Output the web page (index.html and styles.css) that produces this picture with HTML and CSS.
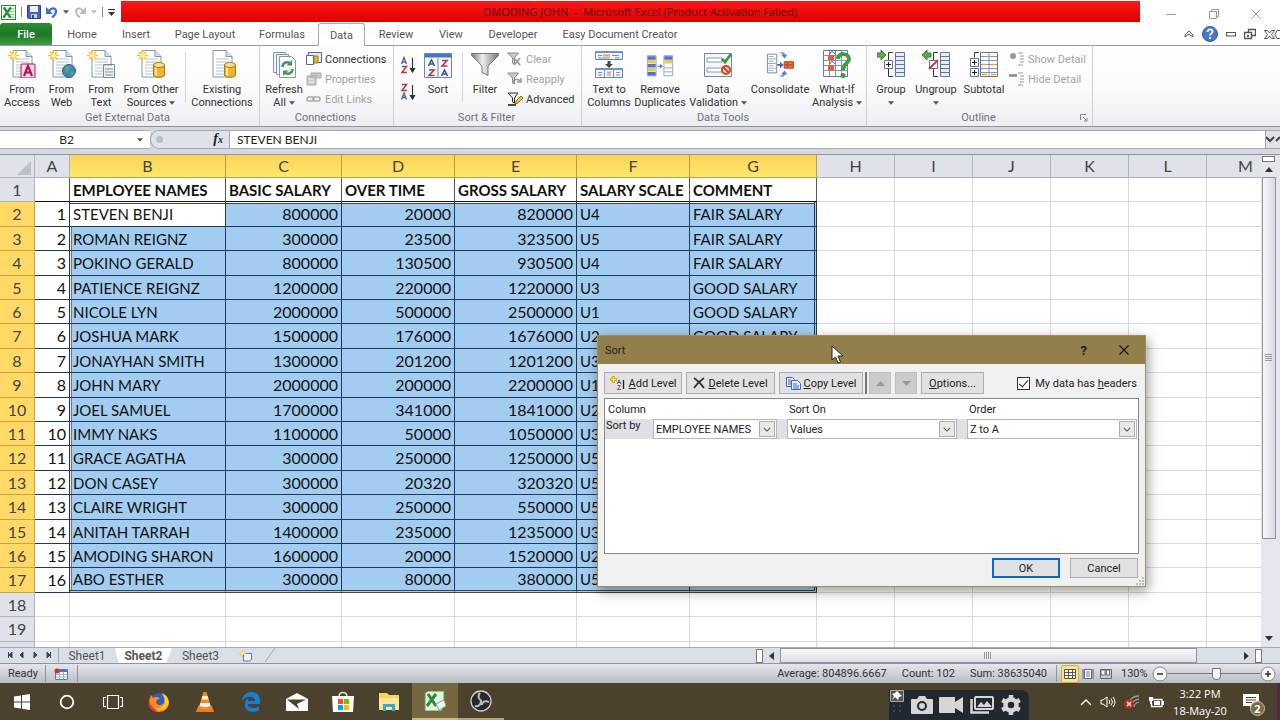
FILE: index.html
```html
<!DOCTYPE html>
<html lang="en">
<head>
<meta charset="utf-8">
<title>OMODING JOHN - Microsoft Excel (Product Activation Failed)</title>
<link rel="stylesheet" href="styles.css">
</head>
<body>
<svg class="defs" aria-hidden="true">
  <symbol id="doc" viewBox="0 0 28 28"><path d="M5 .5h13l6 6v20.500H5z" fill="#fdfefe" stroke="#8295ad"/><path d="M18 .5v6h6" fill="#d4e0ee" stroke="#8295ad"/><path d="M8 9h13M8 12h13M8 15h13M8 18h13M8 21h13M8 24h13" stroke="#b7c2d0"/></symbol>
  <symbol id="spark" viewBox="0 0 12 12"><path d="M6 0v12M0 6h12M2 2l8 8M10 2l-8 8" stroke="#f1c232" stroke-width="1.500"/><circle cx="6" cy="6" r="2.500" fill="#fff48c"/></symbol>
  <symbol id="can" viewBox="0 0 12 16"><path d="M.5 3v10c0 3 11 3 11 0V3" fill="#e9b52c" stroke="#a87a1e"/><path d="M2 4v9l2 1V4z" fill="#fce79b"/><ellipse cx="6" cy="3" rx="5.500" ry="2.500" fill="#fbe08a" stroke="#a87a1e"/></symbol>
  <symbol id="down" viewBox="0 0 7 4"><path d="M0 0h7L3.500 4z" fill="#555"/></symbol>
  <symbol id="az" viewBox="0 0 16 18"><path d="M1.500 8 4 1.500 6.500 8M2.500 6h3" fill="none" stroke="#3f62a6" stroke-width="1.300"/><path d="M2 10.500h4.500L2 16.500h5" fill="none" stroke="#b23b3b" stroke-width="1.500"/><path d="M12.500 2v13M10 12l2.500 4 2.500-4" fill="#333" stroke="#333" stroke-width="1.200"/></symbol>
  <symbol id="za" viewBox="0 0 16 18"><path d="M2 1.500h4.500L2 7.500h5" fill="none" stroke="#b23b3b" stroke-width="1.500"/><path d="M1.500 16.500 4 10l2.500 6.500M2.500 14.500h3" fill="none" stroke="#3f62a6" stroke-width="1.300"/><path d="M12.500 2v13M10 12l2.500 4 2.500-4" fill="#333" stroke="#333" stroke-width="1.200"/></symbol>
  <symbol id="funnel" viewBox="0 0 14 14"><path d="M.5 1h11L7.500 6v6l-2-1V6z" fill="#c9c9c9" stroke="#8d8d8d"/></symbol>
  <symbol id="chev" viewBox="0 0 10 6"><path d="M1 1l4 4 4-4" fill="none" stroke="#555" stroke-width="1.300"/></symbol>
</svg>
<div class="excel">
  <header class="titlebar">
    <div class="quick">
      <svg class="q-logo" viewBox="0 0 16 16"><rect x=".5" y=".5" width="15" height="15" fill="#f3faf2" stroke="#2f7d3a"/><path d="M9 4h5M9 7h5M9 10h5M9 13h5" stroke="#7eb582"/><path d="M3 2.500l7 11M10.500 2.500l-8 11" stroke="#2b8a3b" stroke-width="2.600"/></svg>
      <i class="tick"></i>
      <button class="bare" aria-label="Save"><svg width="14" height="14" viewBox="0 0 14 14"><path d="M.5.5h13v13h-12l-1-1z" fill="#4a61c4" stroke="#33418f"/><path d="M3 1h8v6H3z" fill="#eef2fb"/><path d="M4 9h6v4H4z" fill="#c8d2ee"/><path d="M5 10h2v3H5z" fill="#33418f"/></svg></button>
      <button class="bare" aria-label="Undo"><svg width="12" height="12" viewBox="0 0 12 12"><path d="M3 5C6 1 10 2 10 5.500 10 8 8 10 6 11.500" fill="none" stroke="#3f6fca" stroke-width="2.200"/><path d="M0 1v7h7z" fill="#3f6fca"/></svg></button>
      <svg class="caret" aria-hidden="true"><use href="#down"/></svg>
      <button class="bare redo" aria-label="Redo"><svg width="12" height="12" viewBox="0 0 12 12"><path d="M9 5C6 1 2 2 2 5.500 2 8 4 10 6 11.500" fill="none" stroke="#bcbcbc" stroke-width="2"/><path d="M12 1v7H5z" fill="#bcbcbc"/></svg></button>
      <svg class="caret pale" aria-hidden="true"><use href="#down"/></svg>
      <i class="tick"></i>
      <svg width="7" height="7" viewBox="0 0 7 7"><path d="M0 .5h7" stroke="#333"/><path d="M0 3h7L3.500 7z" fill="#333"/></svg>
    </div>
    <h1 class="caption">OMODING JOHN &nbsp;-&nbsp; Microsoft Excel (Product Activation Failed)</h1>
    <div class="winctl">
      <button class="bare" aria-label="Minimize"><svg width="10" height="10" viewBox="0 0 10 10"><path d="M0 5.500h10" stroke="#999"/></svg></button>
      <button class="bare" aria-label="Restore"><svg width="10" height="10" viewBox="0 0 10 10"><path d="M.5 2.500h7v7h-7zM2.500 2.500v-2h7v7h-2" fill="none" stroke="#999"/></svg></button>
      <button class="bare" aria-label="Close"><svg width="10" height="10" viewBox="0 0 10 10"><path d="M.5.5l9 9M9.500.5l-9 9" stroke="#999"/></svg></button>
    </div>
  </header>
  <nav class="tabs">
    <button class="tab file">File</button><button class="tab t-home">Home</button><button class="tab t-insert">Insert</button><button class="tab t-page">Page Layout</button><button class="tab t-form">Formulas</button><button class="tab active">Data</button><button class="tab t-review">Review</button><button class="tab t-insert">View</button><button class="tab t-dev">Developer</button><button class="tab t-easy">Easy Document Creator</button>
    <div class="tabtools">
      <svg width="10" height="8" viewBox="0 0 10 8"><path d="M1 5l4-4 4 4v2L5 4 1 7z" fill="#fff" stroke="#555"/></svg>
      <svg width="16" height="16" viewBox="0 0 16 16"><circle cx="8" cy="8" r="7.500" fill="#4b77c9" stroke="#2c57a8"/><path d="M5.500 6C5.500 2.500 10.500 2.800 10.500 5.700 10.500 7.500 8 7.500 8 9.500M8 11v2" fill="none" stroke="#fff" stroke-width="1.800"/></svg>
      <svg width="10" height="5" viewBox="0 0 10 5"><rect x=".5" y=".5" width="9" height="3.500" fill="#fff" stroke="#555"/></svg>
      <svg width="12" height="12" viewBox="0 0 12 12"><path d="M4.500 4V1.500h7v6H8M.5 4.500h7v6h-7z" fill="#fff" stroke="#555" stroke-width="1.400"/><path d="M3 7h2v2H3z" fill="#555"/></svg>
      <svg width="16" height="9" viewBox="0 0 16 9"><path d="M.5.5h3L5.500 3l2-2.500h3L7.500 4.500l3 4h-3L5.500 6l-2 2.500h-3l3-4zM16 .5h-3l-2 4 2 4h3" fill="#fff" stroke="#555"/></svg>
    </div>
  </nav>
  <section class="ribbon">
    <div class="group g-ext">
      <div class="tools">
        <button class="big b44"><svg viewBox="0 0 28 28"><use href="#doc"/><use href="#spark" x="0" y="0" width="11" height="11"/><rect x="13" y="14" width="14" height="14" rx="1" fill="#f5d5e4" stroke="#a3195b"/><path d="M16 26l4-10 4 10M17.500 22.500h5" fill="none" stroke="#a3195b" stroke-width="2.200"/></svg>From<br>Access</button>
        <button class="big b35"><svg viewBox="0 0 28 28"><use href="#doc"/><use href="#spark" x="0" y="0" width="11" height="11"/><circle cx="21" cy="21" r="6.500" fill="#3c86c6" stroke="#2a5d92"/><path d="M17 18c3-3 5-2 5 0s-3 2-2 4-4 0-3-4M22 24c1-3 4-3 4-1s-3 4-4 1" fill="#58ae58"/></svg>From<br>Web</button>
        <button class="big b44"><svg viewBox="0 0 28 28"><use href="#doc"/><use href="#spark" x="0" y="0" width="11" height="11"/><path d="M16.500 14.500h11v13h-11z" fill="#f4f7fa" stroke="#7b8898"/><path d="M18 14v2M21 14v2M24 14v2M18 19h8M18 22h8M18 25h8" stroke="#7b8898"/></svg>From<br>Text</button>
        <button class="big b56"><svg viewBox="0 0 28 28"><use href="#doc"/><use href="#spark" x="0" y="0" width="11" height="11"/><use href="#can" x="16" y="12" width="12" height="16"/></svg>From Other<br>Sources <svg class="caret" aria-hidden="true"><use href="#down"/></svg></button>
        <i class="split"></i>
        <button class="big b66"><svg viewBox="0 0 28 28"><use href="#doc"/><use href="#can" x="16" y="12" width="12" height="16"/></svg>Existing<br>Connections</button>
      </div>
      <h2>Get External Data</h2>
    </div>
    <div class="group g-con">
      <div class="tools">
        <button class="big b44"><svg viewBox="0 0 28 28"><path d="M3.500 2.500h12v20h-12z" fill="#eef3f9" stroke="#8295ad"/><path d="M6.500 4.500h12v20h-12z" fill="#eef3f9" stroke="#8295ad"/><path d="M9.500 6.500h12l4 4v17h-16z" fill="#fff" stroke="#8295ad"/><path d="M12.500 17c0-5 6-6 8-3M22.500 19c0 5-6 6-8 3" fill="none" stroke="#3f9c4a" stroke-width="2.400"/><path d="M22 10v5.500h-5.500zM13 26v-5.500h5.500z" fill="#3f9c4a"/></svg>Refresh<br>All <svg class="caret" aria-hidden="true"><use href="#down"/></svg></button>
        <div class="list">
          <button class="small"><svg viewBox="0 0 16 14"><path d="M2.500.5h13v10h-13z" fill="#dfe8f4" stroke="#54698a"/><path d="M.5 3.500h7v9h-7z" fill="#fff" stroke="#54698a"/><path d="M8 4h4v7H8z" fill="#e9b52c" stroke="#a87a1e"/></svg>Connections</button>
          <button class="small" disabled><svg viewBox="0 0 16 14"><path d="M5 1h10v5H5zM1 4h9v9H1z" fill="#c9c9c9" stroke="#aaa"/><path d="M3 7h5M3 10h5" stroke="#fff"/></svg>Properties</button>
          <button class="small" disabled><svg viewBox="0 0 16 14"><rect x="1" y="5" width="7" height="4" rx="2" fill="none" stroke="#aaa" stroke-width="1.600"/><rect x="7" y="5" width="7" height="4" rx="2" fill="none" stroke="#aaa" stroke-width="1.600"/></svg>Edit Links</button>
        </div>
      </div>
      <h2>Connections</h2>
    </div>
    <div class="group g-sort">
      <div class="tools">
        <div class="azcol"><button class="bare" aria-label="Sort A to Z"><svg width="16" height="18"><use href="#az"/></svg></button><button class="bare" aria-label="Sort Z to A"><svg width="16" height="18"><use href="#za"/></svg></button></div>
        <button class="big b44"><svg viewBox="0 0 28 28"><path d="M.5 3.500h27v24H.5z" fill="#f4f8fd" stroke="#6f87ab"/><path d="M1 4h26v3.500H1z" fill="#4475cf"/><path d="M14 8v19" stroke="#6f87ab"/><path d="M4.500 16 7.500 10l3 6M5.500 14h4M17.500 26l3-6 3 6M18.500 24h4" fill="none" stroke="#34549c" stroke-width="1.500"/><path d="M5 20h5l-5 5.500h5.500M18 10.500h5l-5 5.500h5.500" fill="none" stroke="#b23b3b" stroke-width="1.600"/></svg>Sort</button>
        <i class="split"></i>
        <button class="big b44"><svg viewBox="0 0 28 28"><defs><linearGradient id="fg"><stop offset="0" stop-color="#777"/><stop offset=".4" stop-color="#eee"/><stop offset="1" stop-color="#777"/></linearGradient></defs><path d="M.5 3.500h27v2L17 16v9.500l-6-3V16L.5 5.500z" fill="url(#fg)" stroke="#777"/></svg>Filter</button>
        <div class="list">
          <button class="small" disabled><svg viewBox="0 0 16 14"><use href="#funnel" width="14" height="14"/><path d="M7 6l6 7M13 6l-6 7" stroke="#999" stroke-width="1.800"/></svg>Clear</button>
          <button class="small" disabled><svg viewBox="0 0 16 14"><use href="#funnel" width="14" height="14"/><path d="M6 11c0-4 6-5 8-1M14 6v4h-4" fill="none" stroke="#999" stroke-width="1.600"/></svg>Reapply</button>
          <button class="small"><svg viewBox="0 0 16 14"><path d="M1 1h10L7.500 6v5l-2-1V6z" fill="#eee" stroke="#333"/><path d="M1 13h8" stroke="#222" stroke-width="1.600"/><path d="M8 12l1-3 5-5 2 2-5 5z" fill="#efc53b" stroke="#8a6a1e"/></svg>Advanced</button>
        </div>
      </div>
      <h2>Sort &amp; Filter</h2>
    </div>
    <div class="group g-data">
      <div class="tools">
        <button class="big b50"><svg viewBox="0 0 28 28"><path d="M.5 1.500h27v8H.5zM.5 18.500h27v9H.5z" fill="#f1f6fc" stroke="#6b86ad"/><path d="M1 1h26v2H1zM1 18h26v2H1z" fill="#6b94cf"/><path d="M3 5.500h4M17 5.500h7M3 8h12M20 8h5M3 22.500h4M21 22.500h4M3 25h4M12 25h4M21 25h4M9.500 19v8M18.500 19v8" stroke="#6b94cf"/><path d="M8 5.500h7M12 22.500h4" stroke="#e6ab2d" stroke-width="2"/><path d="M12.500 11h3v3H18l-4 4-4-4h2.500z" fill="#444"/></svg>Text to<br>Columns</button>
        <button class="big b52"><svg viewBox="0 0 32 28"><path d="M1.500 4.500h10v23h-10zM20.500 4.500h10v23h-10z" fill="#fff" stroke="#8a9bb5"/><path d="M2 5h9v4H2zM2 14h9v4H2zM2 23h9v4H2zM21 5h9v4h-9z" fill="#4a72d0"/><path d="M2 9.500h9v4H2zM2 18.500h9v4H2zM21 9.500h9v4h-9z" fill="#f1c84b"/><path d="M21 18.500h9M21 23h9" stroke="#8a9bb5"/><path d="M13 16h3v-2l3.500 2.500L16 19v-2h-3z" fill="#4a72d0"/></svg>Remove<br>Duplicates</button>
        <button class="big b64"><svg viewBox="0 0 28 28"><path d="M.5 3.500h27v23H.5z" fill="#f4f7fb" stroke="#6f87ab"/><path d="M3 8h15v4H3zM3 18h15v4H3z" fill="#fff" stroke="#8c9aae"/><path d="M18 9l3 3 6-8" fill="none" stroke="#2f9e3a" stroke-width="2.800"/><circle cx="22" cy="20" r="4" fill="#f7d9cf" stroke="#d8431f" stroke-width="2"/><path d="M19 17l6 6" stroke="#d8431f" stroke-width="1.800"/></svg>Data<br>Validation <svg class="caret" aria-hidden="true"><use href="#down"/></svg></button>
        <button class="big b60"><svg viewBox="0 0 30 28"><path d="M1.500 3.500h10v20h-10z" fill="#fff" stroke="#74839b"/><path d="M1.500 8.500h10M1.500 13.500h10M1.500 18.500h10M3 6h5M3 11h5M3 16h5M3 21h5" stroke="#92a4bf"/><path d="M19.500 11.500h10v7h-10z" fill="#ef6a3d" stroke="#b93e17"/><path d="M20 15h9M23 12v6" stroke="#b93e17"/><path d="M12 14h3v-2.500l4 3.500-4 3.500V16h-3z" fill="#3c68c4"/><path d="M13 3c4-3 7-1 8 1h2l-3 4-4-4h2c-1-2-3-2-5-1M13 26c4 3 7 1 8-1h2l-3-4-4 4h2c-1 2-3 2-5 1" fill="#5b84d4"/></svg>Consolidate</button>
        <button class="big b54"><svg viewBox="0 0 28 28"><path d="M.5.500h24v26H.5z" fill="#fff" stroke="#6b7c96"/><path d="M1 5.500h23M1 10.500h23M1 15.500h23M1 20.500h23M6.500 1v25M12.500 1v25M18.500 1v25" stroke="#8593a8"/><path d="M5 5h6v5H5zM5 15h6v5H5z" fill="#ee5a2d"/><path d="M7 4c0-3 4-3 5 0M7 14c0-3 4-3 5 0" fill="none" stroke="#3c5a9a"/><path d="M15 9c0-7 11-6 11 0 0 5-6 4-6 11" fill="none" stroke="#3f9c42" stroke-width="4"/><circle cx="20" cy="25.500" r="2.500" fill="#3f9c42"/></svg>What-If<br>Analysis <svg class="caret" aria-hidden="true"><use href="#down"/></svg></button>
      </div>
      <h2>Data Tools</h2>
    </div>
    <div class="group g-out">
      <div class="tools">
        <button class="big b44"><svg viewBox="0 0 28 28"><path d="M18.500 2.500h9v24h-9z" fill="#e6edf7" stroke="#5f7696"/><path d="M19 6.500h8M19 10.500h8M19 14.500h8M19 18.500h8M19 22.500h8" stroke="#5f7696"/><path d="M16 2.500h-4.500v24H16" fill="none" stroke="#333"/><path d="M7.500 10.500h8v8h-8z" fill="#fff" stroke="#5f7696"/><path d="M9 14.500h5M11.500 12v5" stroke="#222"/><path d="M0 3h4V0l5 5-5 5V7H0z" fill="#5cad47" stroke="#3a7f2c"/></svg>Group<br><svg class="caret" aria-hidden="true"><use href="#down"/></svg></button>
        <button class="big b46"><svg viewBox="0 0 28 28"><path d="M18.500 2.500h9v24h-9z" fill="#e6edf7" stroke="#5f7696"/><path d="M19 6.500h8M19 10.500h8M19 14.500h8M19 18.500h8M19 22.500h8" stroke="#5f7696"/><path d="M16 2.500h-4.500v24H16" fill="none" stroke="#333"/><path d="M7.500 10.500h8v8h-8z" fill="#fff" stroke="#5f7696"/><path d="M7 19l9-9" stroke="#d13438" stroke-width="2"/><path d="M9 3H5V0L0 5l5 5V7h4z" fill="#5cad47" stroke="#3a7f2c"/></svg>Ungroup<br><svg class="caret" aria-hidden="true"><use href="#down"/></svg></button>
        <button class="big b50"><svg viewBox="0 0 28 28"><path d="M10.500 2.500h17v24h-17z" fill="#fff" stroke="#5f7696"/><path d="M11 6.500h16M11 10.500h16M11 14.500h16M11 18.500h16M11 22.500h16M19 3v23" stroke="#7d95b8"/><path d="M12 14.500h5M21 14.500h5M12 24.500h5M21 24.500h5" stroke="#e6ab2d" stroke-width="1.600"/><path d="M9 2.500H4.500v5" fill="none" stroke="#333"/><path d="M.5 8.500h8v8h-8zM.5 18.500h8v8h-8z" fill="#fff" stroke="#5f7696"/><path d="M2 12.500h5M4.500 10v5M2 22.500h5M4.500 20v5" stroke="#222"/></svg>Subtotal</button>
        <div class="list">
          <button class="small" disabled><svg viewBox="0 0 16 14"><circle cx="4" cy="4" r="3" fill="#999"/><path d="M9 1h5M11 4h4M11 7h4M11 10h4M9 13h5" stroke="#999"/></svg>Show Detail</button>
          <button class="small" disabled><svg viewBox="0 0 16 14"><path d="M0 2h8v3H0z" fill="#999"/><path d="M9 1h5M11 4h4M11 7h4M11 10h4M9 13h5" stroke="#999"/></svg>Hide Detail</button>
        </div>
      </div>
      <h2>Outline</h2>
      <svg class="launcher" viewBox="0 0 8 8"><path d="M.5 6V.5H6M3 3l3.500 3.500M7 4v3H4" fill="none" stroke="#888"/></svg>
    </div>
  </section>
  <div class="formula">
    <div class="namebox"><input aria-label="Name box" value="B2"><svg class="caret" aria-hidden="true"><use href="#down"/></svg></div>
    <div class="fx"><i class="knob"></i><span>f<small>x</small></span></div>
    <input class="formula-input" aria-label="Formula bar" value="STEVEN BENJI">
    <button class="bare expand" aria-label="Expand formula bar"><svg width="16" height="7" viewBox="0 0 16 7"><path d="M1 1l4 4 4-4M11 5l4-4" fill="none" stroke="#444" stroke-width="2"/></svg></button>
  </div>
  <main class="sheet">
    <div class="grid">
      <table>
        <colgroup><col class="c-h"><col class="c-h"><col class="c-b"><col class="c-c"><col class="c-d"><col class="c-e"><col class="c-d"><col class="c-g"><col><col><col><col><col><col></colgroup>
        <thead><tr><th class="corner"><svg width="14" height="14" viewBox="0 0 14 14"><path d="M14 0v14H0z" fill="#bcc0c8"/></svg></th><th>A</th><th class="on">B</th><th class="on">C</th><th class="on">D</th><th class="on">E</th><th class="on">F</th><th class="on">G</th><th>H</th><th>I</th><th>J</th><th>K</th><th>L</th><th>M</th></tr></thead>
        <tbody>
          <tr class="heads"><th>1</th><td></td><td>EMPLOYEE NAMES</td><td>BASIC SALARY</td><td>OVER TIME</td><td>GROSS SALARY</td><td>SALARY SCALE</td><td>COMMENT</td><td></td><td></td><td></td><td></td><td></td><td></td></tr>
          <tr class="rec top"><th>2</th><td>1</td><td class="cur">STEVEN BENJI</td><td>800000</td><td>20000</td><td>820000</td><td>U4</td><td>FAIR SALARY</td><td></td><td></td><td></td><td></td><td></td><td></td></tr>
          <tr class="rec"><th>3</th><td>2</td><td>ROMAN REIGNZ</td><td>300000</td><td>23500</td><td>323500</td><td>U5</td><td>FAIR SALARY</td><td></td><td></td><td></td><td></td><td></td><td></td></tr>
          <tr class="rec"><th>4</th><td>3</td><td>POKINO GERALD</td><td>800000</td><td>130500</td><td>930500</td><td>U4</td><td>FAIR SALARY</td><td></td><td></td><td></td><td></td><td></td><td></td></tr>
          <tr class="rec"><th>5</th><td>4</td><td>PATIENCE REIGNZ</td><td>1200000</td><td>220000</td><td>1220000</td><td>U3</td><td>GOOD SALARY</td><td></td><td></td><td></td><td></td><td></td><td></td></tr>
          <tr class="rec"><th>6</th><td>5</td><td>NICOLE LYN</td><td>2000000</td><td>500000</td><td>2500000</td><td>U1</td><td>GOOD SALARY</td><td></td><td></td><td></td><td></td><td></td><td></td></tr>
          <tr class="rec"><th>7</th><td>6</td><td>JOSHUA MARK</td><td>1500000</td><td>176000</td><td>1676000</td><td>U2</td><td>GOOD SALARY</td><td></td><td></td><td></td><td></td><td></td><td></td></tr>
          <tr class="rec"><th>8</th><td>7</td><td>JONAYHAN SMITH</td><td>1300000</td><td>201200</td><td>1201200</td><td>U3</td><td></td><td></td><td></td><td></td><td></td><td></td><td></td></tr>
          <tr class="rec"><th>9</th><td>8</td><td>JOHN MARY</td><td>2000000</td><td>200000</td><td>2200000</td><td>U1</td><td></td><td></td><td></td><td></td><td></td><td></td><td></td></tr>
          <tr class="rec"><th>10</th><td>9</td><td>JOEL SAMUEL</td><td>1700000</td><td>341000</td><td>1841000</td><td>U2</td><td></td><td></td><td></td><td></td><td></td><td></td><td></td></tr>
          <tr class="rec"><th>11</th><td>10</td><td>IMMY NAKS</td><td>1100000</td><td>50000</td><td>1050000</td><td>U3</td><td></td><td></td><td></td><td></td><td></td><td></td><td></td></tr>
          <tr class="rec"><th>12</th><td>11</td><td>GRACE AGATHA</td><td>300000</td><td>250000</td><td>1250000</td><td>U5</td><td></td><td></td><td></td><td></td><td></td><td></td><td></td></tr>
          <tr class="rec"><th>13</th><td>12</td><td>DON CASEY</td><td>300000</td><td>20320</td><td>320320</td><td>U5</td><td></td><td></td><td></td><td></td><td></td><td></td><td></td></tr>
          <tr class="rec"><th>14</th><td>13</td><td>CLAIRE WRIGHT</td><td>300000</td><td>250000</td><td>550000</td><td>U5</td><td></td><td></td><td></td><td></td><td></td><td></td><td></td></tr>
          <tr class="rec"><th>15</th><td>14</td><td>ANITAH TARRAH</td><td>1400000</td><td>235000</td><td>1235000</td><td>U3</td><td></td><td></td><td></td><td></td><td></td><td></td><td></td></tr>
          <tr class="rec"><th>16</th><td>15</td><td>AMODING SHARON</td><td>1600000</td><td>20000</td><td>1520000</td><td>U2</td><td></td><td></td><td></td><td></td><td></td><td></td><td></td></tr>
          <tr class="rec last"><th>17</th><td>16</td><td>ABO ESTHER</td><td>300000</td><td>80000</td><td>380000</td><td>U5</td><td></td><td></td><td></td><td></td><td></td><td></td><td></td></tr>
          <tr><th>18</th><td></td><td></td><td></td><td></td><td></td><td></td><td></td><td></td><td></td><td></td><td></td><td></td><td></td></tr>
          <tr><th>19</th><td></td><td></td><td></td><td></td><td></td><td></td><td></td><td></td><td></td><td></td><td></td><td></td><td></td></tr>
          <tr><th></th><td></td><td></td><td></td><td></td><td></td><td></td><td></td><td></td><td></td><td></td><td></td><td></td><td></td></tr>
        </tbody>
      </table>
    </div>
    <div class="vscroll">
      <i class="splitbar"></i>
      <svg width="8" height="5" viewBox="0 0 8 5"><path d="M0 5l4-5 4 5z" fill="#333"/></svg>
      <div class="vthumb"><i></i></div>
      <svg width="8" height="5" viewBox="0 0 8 5"><path d="M0 0l4 5 4-5z" fill="#333"/></svg>
    </div>
  </main>
  <div class="bottom">
    <svg class="navs" viewBox="0 0 58 14"><path d="M8.500 4v6M12 4v6L9 7zM23 4v6L20 7zM34 4v6l3-3zM47 4v6l3-3zM50.500 4v6" fill="#3c4356" stroke="#3c4356"/></svg>
    <button class="stab">Sheet1</button><button class="stab sel">Sheet2</button><button class="stab third">Sheet3</button>
    <button class="stab new" aria-label="Insert worksheet"><svg width="14" height="12" viewBox="0 0 14 12"><path d="M4.500 3.500h8v6l-2 1.500h-6z" fill="#eef3fb" stroke="#5b76ac"/><use href="#spark" width="7" height="7"/></svg></button>
    <svg class="slant" width="14" height="15" viewBox="0 0 14 15"><path d="M12 0L2 14" stroke="#a5a9b2"/></svg>
    <div class="hscroll">
      <i class="grip"></i>
      <svg width="5" height="8" viewBox="0 0 5 8"><path d="M5 0v8L0 4z" fill="#333"/></svg>
      <div class="track"><div class="hthumb"><i></i></div></div>
      <svg width="5" height="8" viewBox="0 0 5 8"><path d="M0 0v8l5-4z" fill="#333"/></svg>
      <i class="grip"></i>
    </div>
  </div>
  <footer class="status">
    <span class="ready">Ready</span><i class="bar"></i>
    <svg class="macro" width="14" height="12" viewBox="0 0 14 12"><path d="M1.500 1.500h12v10h-12z" fill="#fff" stroke="#5a78b0"/><path d="M2 2h11v2H2z" fill="#4a72c8"/><path d="M2 6.500h11M2 9h11M5.500 4v7M9.500 4v7" stroke="#9ab0d6"/><circle cx="3" cy="3" r="2.500" fill="#c8372b"/></svg><i class="bar"></i>
    <div class="stats"><span>Average: 804896.6667</span><span>Count: 102</span><span>Sum: 38635040</span></div><i class="bar"></i>
    <div class="views">
      <button class="view on" aria-label="Normal"><svg width="12" height="10" viewBox="0 0 12 10"><path d="M.5.500h11v9H.5zM.5 3.500h11M.5 6.500h11M4.500 0v10M8.500 0v10" fill="#fff" stroke="#555"/></svg></button>
      <button class="view" aria-label="Page layout"><svg width="12" height="10" viewBox="0 0 12 10"><path d="M0 0h12v10H0z" fill="#999"/><path d="M2.500.500h7v9h-7z" fill="#fff" stroke="#666"/><path d="M4 3h4M4 5h4M4 7h4" stroke="#777"/></svg></button>
      <button class="view" aria-label="Page break preview"><svg width="12" height="10" viewBox="0 0 12 10"><path d="M.5.500h11v9H.5z" fill="#ccc" stroke="#666"/><path d="M1 1h4v5H1zM6.500 1h3v5h-3z" fill="#fff" stroke="#666"/></svg></button>
    </div>
    <span class="zoom">130%</span>
    <button class="round" aria-label="Zoom out"><svg width="16" height="16" viewBox="0 0 16 16"><circle cx="8" cy="8" r="7" fill="#f7f7f8" stroke="#888"/><path d="M5 8h6" stroke="#333" stroke-width="1.500"/></svg></button>
    <input class="slider" type="range" min="0" max="100" value="53" aria-label="Zoom">
    <button class="round" aria-label="Zoom in"><svg width="16" height="16" viewBox="0 0 16 16"><circle cx="8" cy="8" r="7" fill="#f7f7f8" stroke="#888"/><path d="M5 8h6M8 5v6" stroke="#333" stroke-width="1.500"/></svg></button>
  </footer>
</div>
<div class="taskbar">
  <button class="app start" aria-label="Start"><svg width="16" height="16" viewBox="0 0 16 16"><path d="M0 2.500l7-1v6H0zM8 1.300L16 0v7.500H8zM0 8.500h7v6l-7-1zM8 8.500h8V16l-8-1.300z" fill="#fff"/></svg></button>
  <button class="app" aria-label="Search"><svg width="16" height="16" viewBox="0 0 16 16"><circle cx="8" cy="8" r="6.300" fill="none" stroke="#fff" stroke-width="1.800"/></svg></button>
  <button class="app" aria-label="Task view"><svg width="20" height="14" viewBox="0 0 20 14"><path d="M4.500.500h11v13h-11zM3 2.500H.5v9H3M17 2.500h2.500v9H17" fill="none" stroke="#fff" stroke-width="1.200"/></svg></button>
  <button class="app" aria-label="Firefox"><svg width="22" height="22" viewBox="0 0 22 22"><circle cx="11" cy="11" r="9" fill="#2b5fc4"/><path d="M3 4l2 3c3-2 6-1 7 1-3 0-4 2-4 3 1 4 5 4 8 1 1-3 0-6-2-9 4 2 7 5 7 9-1 12-19 12-20 0 0-3 1-6 2-8z" fill="#ff8a16"/><path d="M14 2c5 2 8 7 6 12-3 6-11 7-15 3 5 1 11 0 12-6 0-4-1-6-3-9z" fill="#ffcb2e"/><path d="M1 10c2 4 4 8 9 9-5 3-11-3-9-9z" fill="#e5364c"/></svg></button>
  <button class="app" aria-label="VLC"><svg width="20" height="22" viewBox="0 0 20 22"><path d="M3 15h14l2 6H1z" fill="#f07d14"/><path d="M8.500 1h3l5 16c-3 2-10 2-13 0z" fill="#f58a1c"/><path d="M7.500 5h5l1 3.500h-7zM5.500 12h9l1 3c-3 1.500-8 1.500-11 0z" fill="#eee"/></svg></button>
  <button class="app" aria-label="Edge"><svg width="20" height="20" viewBox="0 0 20 20"><path d="M1 9C2-3 19-3 19 9v3H7c0 5 7 5 11 2.500v4C9 22 3 18 4 11c.5-3 2-4 4-5-1 1-1 2-1 3h7c0-6-9-5-13 0z" fill="#1380d8"/></svg></button>
  <button class="app" aria-label="Mail"><svg width="22" height="18" viewBox="0 0 22 18"><path d="M0 6l11-6 11 6v12H0z" fill="#fff"/><path d="M1 6.500h19L11 11l2 5z" fill="#4b422d"/></svg></button>
  <button class="app" aria-label="Store"><svg width="22" height="22" viewBox="0 0 22 22"><path d="M7 6c0-6 8-6 8 0" fill="none" stroke="#ddd" stroke-width="1.500"/><path d="M0 5h22l-1 16H1z" fill="#fff"/><path d="M6 8h5v5H6z" fill="#f25022"/><path d="M12 8h5v5h-5z" fill="#7fba00"/><path d="M6 14h5v5H6z" fill="#00a4ef"/><path d="M12 14h5v5h-5z" fill="#ffb900"/></svg></button>
  <button class="app" aria-label="File Explorer"><svg width="20" height="18" viewBox="0 0 20 18"><path d="M0 0h8l2 2h10v15H0z" fill="#f6d36b"/><path d="M0 5h20v12H0z" fill="#fde598"/><path d="M4 18v-7h12v7h-3v-4H7v4z" fill="#3ba3dc"/></svg></button>
  <button class="app run" aria-label="Excel"><svg width="22" height="20" viewBox="0 0 22 20"><path d="M1 2l3-2h16v16l-3 4H1z" fill="#e3f2e1" stroke="#48a151"/><path d="M4 3l8 12M12 3L3 15" stroke="#2c8a3a" stroke-width="3"/><path d="M12 13l8-4 2 6-7 4z" fill="#fff" stroke="#6cb272"/></svg></button>
  <button class="app open" aria-label="OBS"><svg width="22" height="22" viewBox="0 0 22 22"><circle cx="11" cy="11" r="10" fill="#2a2a2e" stroke="#d0d0d0" stroke-width="1.300"/><path d="M10 3c-3 3-1 7 2 8M19 12c-4-2-7 0-7 3M5 16c4 1 6-2 6-5" fill="none" stroke="#bbb" stroke-width="2"/></svg></button>
  <div class="recorder">
    <svg class="pin" width="14" height="22" viewBox="0 0 14 22"><path d="M.5.500h13v11H.5z" fill="#555" stroke="#aaa"/><path d="M7 1l5 5-3 1-1 3-3-3-3 3 2-4-2-2 3-1z" fill="#fff"/><path d="M3 15h2v2H3zM9 15h2v2H9zM3 20h2v2H3zM9 20h2v2H9z" fill="#444a50"/></svg>
    <svg width="22" height="18" viewBox="0 0 22 18"><path d="M1 3h5l2-3h6l2 3h5q1 0 1 1v13q0 1-1 1H1q-1 0-1-1V4q0-1 1-1z" fill="#d6d6d6"/><circle cx="11" cy="10" r="4" fill="none" stroke="#222830" stroke-width="2"/></svg>
    <svg width="24" height="16" viewBox="0 0 24 16"><path d="M1 0h15v5l8-5v16l-8-5v5H1q-1 0-1-1V1q0-1 1-1z" fill="#d6d6d6"/></svg>
    <svg width="24" height="18" viewBox="0 0 24 18"><path d="M1.500 3v13.500H19" fill="none" stroke="#d6d6d6" stroke-width="2.500"/><rect x="5" y="1" width="18" height="12" rx="1" fill="none" stroke="#d6d6d6" stroke-width="2"/><path d="M7 11l4-5 3 3 3-4 5 6z" fill="#d6d6d6"/></svg>
    <svg width="22" height="20" viewBox="0 0 22 20"><circle cx="11" cy="10" r="5.500" fill="none" stroke="#d6d6d6" stroke-width="4.500"/><path d="M11 0v4M11 16v4M2.300 5l3.500 2M16.200 13l3.500 2M2.300 15l3.500-2M16.200 7l3.500-2" stroke="#d6d6d6" stroke-width="4.500"/></svg>
  </div>
  <div class="tray">
    <svg width="12" height="8" viewBox="0 0 12 8"><path d="M1 7l5-5 5 5" fill="none" stroke="#fff" stroke-width="1.300"/></svg>
    <svg width="16" height="12" viewBox="0 0 16 12"><path d="M1 4h2l4-3v10L3 8H1zM9 4q1.500 2 0 4M11 2.500q3 3.500 0 7M13 1q4 5 0 10" fill="none" stroke="#fff"/></svg>
    <svg width="16" height="14" viewBox="0 0 16 14"><path d="M4 12C4 6 8 1 15 1M7 12c0-4 3-7 8-8M10 12c0-2 2-4 5-5" fill="none" stroke="#a29c8c" stroke-width="1.300"/><circle cx="5" cy="9" r="4.500" fill="#d82222"/><path d="M3 7l4 4M7 7l-4 4" stroke="#fff" stroke-width="1.300"/></svg>
    <svg width="16" height="12" viewBox="0 0 16 12"><path d="M5 3.500h9v7H3.500V7" fill="none" stroke="#fff" stroke-width="1.400"/><path d="M6 5h6v4H6zM14 5h2v4h-2zM1 1h4v4H1zM2 5h2v3H2z" fill="#fff"/></svg>
  </div>
  <time class="clock">3:22 PM<br>18-May-20</time>
  <div class="notes"><svg width="16" height="15" viewBox="0 0 16 15"><path d="M0 0h16v12h-6l-3 3v-3H0z" fill="#fff"/><path d="M3 3.500h10M3 6h10M3 8.500h6" stroke="#4b422d"/></svg><span class="count">2</span></div>
</div>
<div class="dialog" role="dialog" aria-labelledby="dlg-title">
  <div class="dlg-head"><h2 id="dlg-title">Sort</h2><button class="bare" aria-label="Help">?</button><button class="bare" aria-label="Close dialog"><svg width="10" height="10" viewBox="0 0 10 10"><path d="M.5.500l9 9M9.500.500l-9 9" stroke="#111" stroke-width="1.200"/></svg></button></div>
  <svg class="cursor" width="13" height="20" viewBox="0 0 13 20"><path d="M1 1v14l3.500-3 2.500 6 2.500-1-2.500-6H12z" fill="#fff" stroke="#222"/></svg>
  <div class="dlg-tools">
    <button class="push w78"><svg width="16" height="14" viewBox="0 0 16 14"><path d="M3.500 0v7M0 3.500h7" stroke="#d6a91e" stroke-width="3"/><path d="M3.500 1v5M1 3.500h5" stroke="#fff06a"/><path d="M7 8l2-4 2 4M7.500 6.500h3" fill="none" stroke="#3f62a6"/><path d="M7.500 9.500h3l-3 4h3.500" fill="none" stroke="#8a4a8a"/><path d="M13.500 4v9" stroke="#222" stroke-width="1.400"/></svg><span><u>A</u>dd Level</span></button>
    <button class="push w89"><svg width="12" height="12" viewBox="0 0 12 12"><path d="M1 1q6 4 10 10M11 1Q5 5 1 11" fill="none" stroke="#333" stroke-width="1.800"/></svg><span><u>D</u>elete Level</span></button>
    <button class="push w84"><svg width="15" height="13" viewBox="0 0 15 13"><path d="M.5.500h6l2 2v7h-8z" fill="#e8f0fc" stroke="#3f69bd"/><path d="M5.500 3.500h6l3 3v6h-9z" fill="#e8f0fc" stroke="#3f69bd"/><path d="M7 7h4M7 9h6M7 11h6M2 3h3M2 5h3M2 7h3" stroke="#3f69bd"/></svg><span><u>C</u>opy Level</span></button>
    <i class="rule"></i>
    <button class="push w22" disabled aria-label="Move up"><svg width="9" height="5" viewBox="0 0 9 5"><path d="M0 5l4.500-5L9 5z" fill="#9a9a9a"/></svg></button>
    <button class="push w22" disabled aria-label="Move down"><svg width="9" height="5" viewBox="0 0 9 5"><path d="M0 0l4.500 5L9 0z" fill="#9a9a9a"/></svg></button>
    <button class="push w63"><span><u>O</u>ptions...</span></button>
    <label class="check"><input type="checkbox" checked><span>My data has <u>h</u>eaders</span></label>
  </div>
  <div class="levels">
    <div class="lv lv-head"><span>Column</span><span>Sort On</span><span>Order</span></div>
    <div class="lv lv-row">
      <label class="field"><span>Sort by</span><span class="pick"><select><option>EMPLOYEE NAMES</option></select><i><svg width="8" height="5"><use href="#chev"/></svg></i></span></label>
      <span class="pick"><select aria-label="Sort On"><option>Values</option></select><i><svg width="8" height="5"><use href="#chev"/></svg></i></span>
      <span class="pick"><select aria-label="Order"><option>Z to A</option></select><i><svg width="8" height="5"><use href="#chev"/></svg></i></span>
    </div>
  </div>
  <div class="dlg-foot"><button class="push ok">OK</button><button class="push">Cancel</button></div>
  <svg class="resize" width="8" height="8" viewBox="0 0 8 8"><path d="M6 0h2v2H6zM6 3h2v2H6zM6 6h2v2H6zM3 3h2v2H3zM3 6h2v2H3zM0 6h2v2H0z" fill="#bbb"/></svg>
</div>
</body>
</html>
```
FILE: styles.css
```css
* { box-sizing: border-box; }
body { margin: 0; height: 100vh; display: flex; flex-direction: column; overflow: hidden; background: #fff; color: #333; font: 11px/13px Roboto, "Open Sans", sans-serif; }
button, input, select { font: inherit; color: inherit; margin: 0; padding: 0; border: 0; border-radius: 0; background: none; }
h1, h2 { margin: 0; font: inherit; }
svg { flex: none; display: block; }
i { flex: none; display: block; }
.defs { position: absolute; width: 0; height: 0; }
.bare { display: flex; align-items: center; justify-content: center; }
.caret { width: 6px; height: 4px; display: inline-block; vertical-align: middle; }
.pale { opacity: .4; }
.excel { flex: 1; min-height: 0; display: flex; flex-direction: column; }

.titlebar { display: flex; height: 23px; flex: none; padding-top: 1px; }
.quick { width: 121px; flex: none; display: flex; align-items: center; gap: 5px; padding-left: 1px; }
.q-logo { width: 15px; height: 15px; }
.quick .tick { width: 1px; height: 10px; background: #888; }
.caption { flex: 1; background: linear-gradient(#fa1818, #e00000); color: #5c0508; text-align: center; font: 11px/21px "Open Sans", sans-serif; height: 21px; padding-left: 19px; }
.winctl { width: 140px; flex: none; display: flex; align-items: center; justify-content: space-between; padding: 3px 19px 0 26px; }

.tabs { display: flex; height: 23px; flex: none; border-bottom: 1px solid #9a9ea6; }
.tab { height: 22px; color: #555; }
.file { width: 52px; background: linear-gradient(#2f8b35, #1f7526 50%, #3fa03c); color: #fff; font-weight: 500; border-radius: 3px 3px 0 0; }
.active { width: 47px; height: 23px; margin-left: 4px; border: 1px solid #a6aab2; border-bottom: 0; border-radius: 3px 3px 0 0; background: #fff; }
.t-home { width: 60px; } .t-insert { width: 48px; } .t-page { width: 90px; } .t-form { width: 64px; }
.t-review { width: 62px; } .t-dev { width: 76px; } .t-easy { width: 138px; }
.tabtools { margin-left: auto; display: flex; align-items: center; gap: 8px; }

.ribbon { display: flex; height: 81px; flex: none; background: linear-gradient(#fff, #fbfbfc 50%, #eceef2); border-bottom: 1px solid #8e929b; }
.group { position: relative; display: flex; flex-direction: column; border-right: 1px solid #cdd0d6; padding: 3px 2px 0; }
.group h2 { text-align: center; color: #6c7280; line-height: 16px; padding-right: 2px; }
.g-ext { width: 260px; padding-left: 0; } .g-con { width: 134px; } .g-sort { width: 188px; } .g-data { width: 285px; } .g-out { width: 226px; }
.tools { display: flex; height: 61px; }
.big { flex: none; white-space: nowrap; display: block; text-align: center; align-self: flex-start; line-height: 13px; }
.big > svg:first-child { width: 28px; height: 28px; margin: 1px auto 5px; }
.b35 { width: 35px; } .b44 { width: 44px; } .b46 { width: 46px; } .b50 { width: 50px; } .b52 { width: 52px; } .b54 { width: 54px; } .b56 { width: 56px; } .b60 { width: 60px; } .b64 { width: 64px; } .b66 { width: 66px; }
.split { width: 1px; height: 50px; margin: 3px 3px 0 6px; background: #d5d8dd; }
.g-sort .split { margin: 3px 0 0 2px; }
.list { display: flex; flex-direction: column; }
.small { display: flex; align-items: center; gap: 3px; height: 20px; white-space: nowrap; }
.small svg { width: 16px; height: 14px; }
.small:disabled { color: #a3a3a3; }
.azcol { width: 20px; padding: 7px 0 0 4px; display: flex; flex-direction: column; gap: 9px; }
.launcher { position: absolute; right: 4px; bottom: 4px; width: 8px; height: 8px; }

.formula { display: flex; height: 27px; flex: none; padding: 3px 0 5px; background: #d5d8df; font: 12px/18px Lato, sans-serif; color: #222; }
.formula > * { background: #fff; border-top: 1px solid #a5a9b2; border-bottom: 1px solid #a5a9b2; }
.namebox { display: flex; align-items: center; width: 150px; padding-right: 7px; }
.namebox input { flex: 1; text-align: center; padding-right: 4px; min-width: 0; }
.fx { width: 80px; display: flex; align-items: center; justify-content: space-between; padding: 0 6px 0 5px; background: #dfe2e8; border-right: 1px solid #9da1aa; border-left: 1px solid #9da1aa; border-radius: 9px 0 0 9px; }
.fx span { font: italic bold 14px/16px "Liberation Serif", serif; }
.fx small { font-size: 10px; }
.knob { width: 7px; height: 7px; border-radius: 50%; background: #b9bdc6; }
.formula-input { flex: 1; padding-left: 7px; min-width: 0; }
.formula .expand { width: 15px; background: #dfe2e8; border-left: 1px solid #9da1aa; overflow: hidden; }

.sheet { flex: 1; min-height: 0; display: flex; border-top: 1px solid #8d93a1; }
.grid { flex: 1; min-width: 0; overflow: hidden; }
table { table-layout: fixed; width: 1284px; border-collapse: separate; border-spacing: 0; font: 16px/22px Lato, sans-serif; color: #111; }
col { width: 78px; }
.c-h { width: 35px; } .c-b { width: 156px; } .c-c { width: 116px; } .c-d { width: 113px; } .c-e { width: 122px; } .c-g { width: 127px; }
th, td { padding: 0 3px; height: 24px; border-right: 1px solid #d7d9dc; border-bottom: 1px solid #d7d9dc; white-space: nowrap; overflow: hidden; font-weight: normal; text-align: left; }
tr:nth-child(5n+2) > *, tr:nth-child(5n+4) > * { height: 25px; }
thead th { height: 23px; }
th { background: #dfe2e8; text-align: center; border-color: #aeb3bd; color: #444; }
.corner svg { margin: 3px 0 0 auto; }
thead .on { background: linear-gradient(#fbd45b, #ffe768); border-color: #c69b3a; }
.rec th { background: #ffd966; border-color: #c8a440; }
.heads td { font-size: 15px; font-weight: bold; border-bottom-color: #111; }
.heads td:nth-child(n+2):nth-child(-n+8) { border-right-color: #555; }
.heads td:nth-child(n+9) { border-bottom-color: #d7d9dc; }
.rec td:nth-child(n+2):nth-child(-n+8) { border-color: #1d3a5c; }
.rec td:nth-child(n+3):nth-child(-n+8) { background: #a2cdf0; }
.rec td.cur:nth-child(3):nth-child(-n+8) { background: #fff; }
.rec td:nth-child(2), .rec td:nth-child(4), .rec td:nth-child(5), .rec td:nth-child(6) { text-align: right; }
.rec td:nth-child(3), .rec td:nth-child(7), .rec td:nth-child(8) { font-size: 15px; }
.rec td:nth-child(2) { border-right-color: #777; }
.rec td:nth-child(3) { box-shadow: inset 1px 0 #e6e6e6, inset 2px 0 #777; }
.rec td:nth-child(8) { border-right: 3px double #555; }
.top td:nth-child(n+3):nth-child(-n+8) { box-shadow: inset 0 1px #fff, inset 0 2px #444; }
.last td:nth-child(n+3):nth-child(-n+8) { border-bottom: 3px double #444; }

.vscroll { width: 19px; flex: none; background: #e3e6ec; display: flex; flex-direction: column; align-items: center; gap: 5px; padding: 1px 4px 6px 0; }
.splitbar { width: 13px; height: 6px; border: 1px solid #777; background: #fff; }
.vthumb { flex: none; height: 362px; width: 14px; margin-bottom: auto; border: 1px solid #8d93a1; background: linear-gradient(90deg, #f7f8fa, #d5d9e1); display: flex; align-items: center; justify-content: center; }
.vthumb i { width: 7px; height: 8px; background: repeating-linear-gradient(#999 0 1px, transparent 1px 2px); }

.bottom { display: flex; height: 16px; flex: none; background: #dadee6; border-top: 1px solid #a5a9b2; }
.navs { width: 58px; height: 14px; }
.stab { width: 57px; color: #555; line-height: 14px; font-size: 12px; border-left: 1px solid #a5a9b2; }
.sel { background: #fff; font-weight: bold; border: 0; clip-path: polygon(0 0, 100% 0, 90% 100%, 6% 100%); }
.third { border: 0; }
.new { width: 34px; display: flex; align-items: center; justify-content: center; border: 0; }
.hscroll { margin-left: auto; width: 524px; display: flex; align-items: center; gap: 6px; padding-right: 18px; }
.hscroll .grip { width: 7px; height: 14px; border: 1px solid #777; background: #fff; }
.track { flex: 1; height: 15px; }
.hthumb { width: 91%; height: 15px; border: 1px solid #8d93a1; background: linear-gradient(#f6f7f9, #dde0e6); display: flex; align-items: center; justify-content: center; }
.hthumb i { width: 8px; height: 7px; background: repeating-linear-gradient(90deg, #999 0 1px, transparent 1px 2px); }

.status { display: flex; align-items: center; height: 20px; flex: none; background: linear-gradient(#e4e6ea, #b9bdc5); border-top: 1px solid #8d93a1; }
.ready { width: 45px; padding-left: 8px; }
.bar { width: 1px; height: 17px; background: #8d93a1; }
.macro { margin: 0 9px 0 8px; }
.stats { margin-left: auto; display: flex; gap: 15px; padding-right: 9px; }
.views { display: flex; margin-left: 4px; }
.view { width: 18px; height: 18px; display: flex; align-items: center; justify-content: center; }
.view.on { background: #ffe38a; border: 1px solid #d9a93a; border-radius: 2px; }
.zoom { width: 37px; padding-left: 6px; }
.round { width: 16px; flex: none; }
.slider { appearance: none; width: 92px; height: 16px; background: linear-gradient(#777, #777) center / 100% 1px no-repeat; }
.slider::-webkit-slider-thumb { appearance: none; width: 9px; height: 12px; background: #f4f4f5; border: 1px solid #777; border-radius: 0 0 4px 4px; }
.status .round:last-child { margin-right: 4px; }

.taskbar { display: flex; height: 37px; flex: none; background: #4b422d; color: #fff; border-right: 3px solid #51284a; font: 11px/17px "Open Sans", sans-serif; }
.app { width: 46px; display: flex; align-items: center; justify-content: center; }
.start { width: 44px; }
.run { background: #75663f; border-bottom: 2px solid #c9b983; }
.open { border-bottom: 2px solid #b5a677; }
.recorder { margin: 7px 0 0 auto; width: 140px; background: #222830; border-radius: 0 8px 0 0; display: flex; align-items: center; justify-content: space-between; padding: 0 7px 0 1px; }
.pin { align-self: flex-start; }
.tray { display: flex; align-items: center; gap: 8px; margin-left: 51px; }
.clock { width: 60px; margin-left: 6px; text-align: center; padding-top: 2px; }
.notes { position: relative; width: 47px; padding: 11px 0 0 13px; }
.count { position: absolute; left: 20px; top: 18px; width: 15px; height: 15px; border-radius: 50%; background: #786b4a; border: 1px solid #c9c0a6; text-align: center; line-height: 13px; font-weight: bold; }

.dialog { position: absolute; left: 597px; top: 335px; width: 549px; min-height: 251px; background: #f0f0f0; border: 1px solid #a08e5d; box-shadow: 2px 4px 12px rgba(0, 0, 0, .4); color: #222; display: flex; flex-direction: column; }
.dlg-head { display: flex; height: 28px; background: #937f49; align-items: center; padding: 0 16px 0 7px; gap: 32px; }
.dlg-head h2 { margin-right: auto; }
.dlg-head button { font-size: 13px; font-weight: bold; }
.cursor { position: absolute; left: 233px; top: 9px; }
.dlg-tools { display: flex; gap: 4px; height: 22px; margin: 8px 8px 4px 6px; }
.push { display: flex; align-items: center; justify-content: center; gap: 3px; background: #e1e1e1; border: 1px solid #adadad; white-space: nowrap; }
.push:disabled { background: #ccc; border-color: #bfbfbf; }
.w78 { width: 78px; } .w89 { width: 89px; } .w84 { width: 84px; } .w22 { width: 22px; } .w63 { width: 63px; }
.rule { width: 2px; background: #777; margin: 0 -2px; }
.check { display: flex; align-items: center; gap: 5px; margin-left: auto; white-space: nowrap; }
.check input { appearance: none; width: 13px; height: 13px; border: 1px solid #333; background: #fff; display: grid; place-items: center; }
.check input:checked::after { content: ""; width: 4px; height: 8px; border: solid #222; border-width: 0 1px 1px 0; rotate: 40deg; margin-top: -2px; }
.levels { margin: 0 6px; height: 156px; background: #fff; border: 1px solid #828790; }
.lv { display: grid; grid-template-columns: 171px 170px 170px; gap: 10px; }
.lv-head { height: 20px; align-items: center; padding-left: 3px; }
.lv-row { height: 20px; background: #e0dfe6; padding-left: 1px; margin-right: 1px; }
.field { display: flex; justify-content: space-between; }
.field .pick { width: 124px; }
.pick { position: relative; background: #fff; border: 1px solid #b5b5bb; display: block; }
.pick select { appearance: none; width: 100%; height: 18px; padding-left: 2px; outline: 0; }
.pick i { position: absolute; right: 1px; top: 1px; width: 16px; height: 16px; border: 1px solid #adadad; background: #e8e8e8; display: grid; place-items: center; pointer-events: none; }
.dlg-foot { display: flex; justify-content: flex-end; gap: 10px; padding: 4px 7px 8px; }
.dlg-foot .push { width: 68px; height: 20px; }
.dlg-foot .ok { border: 2px solid #0a6ac8; }
.resize { position: absolute; right: 1px; bottom: 1px; }
```
